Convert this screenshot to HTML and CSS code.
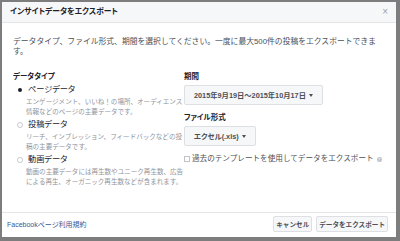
FILE: index.html
```html
<!DOCTYPE html>
<html lang="ja">
<head>
    <meta charset="UTF-8">
    <title>インサイトデータをエクスポート</title>
    <link rel="stylesheet" href="styles.css">
</head>
<body>
    <div class="dialog">
        <div class="header">
            <span class="title">インサイトデータをエクスポート</span>
            <span class="close">×</span>
        </div>

        <div class="content">
            <p class="intro">データタイプ、ファイル形式、期間を選択してください。一度に最大500件の投稿をエクスポートできます。</p>

            <div class="columns">
                <div class="col-left">
                    <div class="label">データタイプ</div>

                    <div class="option">
                        <div class="option-row"><span class="radio checked"></span>ページデータ</div>
                        <div class="desc">エンゲージメント、いいね！の場所、オーディエンス情報などのページの主要データです。</div>
                    </div>
                    <div class="option">
                        <div class="option-row"><span class="radio"></span>投稿データ</div>
                        <div class="desc">リーチ、インプレッション、フィードバックなどの投稿の主要データです。</div>
                    </div>
                    <div class="option">
                        <div class="option-row"><span class="radio"></span>動画データ</div>
                        <div class="desc">動画の主要データには再生数やユニーク再生数、広告による再生、オーガニック再生数などが含まれます。</div>
                    </div>
                </div>

                <div class="col-right">
                    <div class="label">期間</div>
                    <button class="select">2015年9月19日～2015年10月17日 <span class="caret"></span></button>

                    <div class="label spaced">ファイル形式</div>
                    <button class="select">エクセル(.xls) <span class="caret"></span></button>

                    <div class="check-row">
                        <span class="checkbox"></span>
                        過去のテンプレートを使用してデータをエクスポート
                        <span class="help">?</span>
                    </div>
                </div>
            </div>
        </div>

        <div class="footer">
            <a class="terms" href="#">Facebookページ利用規約</a>
            <div class="actions">
                <button class="btn">キャンセル</button>
                <button class="btn">データをエクスポート</button>
            </div>
        </div>
    </div>
</body>
</html>
```

FILE: styles.css
```css
body {
    margin: 0;
    width: 400px;
    height: 241px;
    background: #7d7d7d;
    font-family: "Liberation Sans", "Noto Sans CJK JP", sans-serif;
    font-size: 7.5px;
    line-height: 10px;
    color: #4b4f56;
    font-feature-settings: "palt";
    overflow: hidden;
}

.dialog {
    margin: 2px 4px 0 2px;
    height: 235px;
    background: #ffffff;
    display: flex;
    flex-direction: column;
}

.header {
    height: 20px;
    padding: 0 8px 0 8px;
    background: #f6f7f9;
    border-bottom: 1px solid #e5e5e5;
    display: flex;
    justify-content: space-between;
    align-items: center;
    flex-shrink: 0;
}

.title {
    font-weight: bold;
    color: #1d2129;
    font-size: 7.8px;
}

.close {
    color: #a0a3a9;
    font-size: 10px;
}

.content {
    flex: 1;
    padding: 14px 13px 0 11px;
}

.intro {
    margin: 0;
    padding-right: 4px;
    font-size: 7.8px;
    font-feature-settings: normal;
}

.columns {
    display: grid;
    grid-template-columns: 171px 1fr;
    margin-top: 15px;
}

.label {
    font-weight: bold;
    color: #1d2129;
}

.label.spaced {
    margin-top: 8px;
}

.option {
    margin-top: 3px;
    margin-bottom: 1px;
}

.option-row {
    display: flex;
    align-items: center;
    color: #1d2129;
    font-size: 8.2px;
}

.radio {
    width: 6px;
    height: 6px;
    border: 1px solid #c8cace;
    border-radius: 50%;
    margin: 0 5px 0 4px;
    box-sizing: border-box;
    position: relative;
}

.radio.checked {
    border: none;
}

.radio.checked::after {
    content: "";
    position: absolute;
    left: 1px;
    top: 1px;
    width: 4px;
    height: 4px;
    border-radius: 50%;
    background: #1d2129;
}

.desc {
    margin-top: 2px;
    padding-left: 13px;
    color: #90949c;
    font-size: 6.55px;
    font-feature-settings: normal;
}

.col-right {
    display: flex;
    flex-direction: column;
    align-items: flex-start;
}

.select {
    margin-top: 3px;
    height: 20px;
    padding: 0 9px;
    border: 1px solid #dddfe2;
    border-radius: 2px;
    background: #f6f7f9;
    color: #4b4f56;
    font-family: inherit;
    font-size: 7.3px;
    font-weight: bold;
    font-feature-settings: "palt";
    display: flex;
    align-items: center;
    gap: 3px;
}

.caret {
    width: 0;
    height: 0;
    border-left: 2px solid transparent;
    border-right: 2px solid transparent;
    border-top: 3px solid #4b4f56;
}

.check-row {
    margin-top: 8px;
    display: flex;
    align-items: center;
    white-space: nowrap;
    color: #4b4f56;
    font-size: 7.6px;
    font-feature-settings: normal;
}

.checkbox {
    width: 6px;
    height: 6px;
    border: 1px solid #bec3c9;
    margin-right: 2px;
    box-sizing: border-box;
}

.help {
    margin-left: 3px;
    width: 5px;
    height: 5px;
    border-radius: 50%;
    background: #bec3c9;
    color: #fff;
    font-size: 4px;
    line-height: 5px;
    text-align: center;
}

.footer {
    height: 24px;
    flex-shrink: 0;
    border-top: 1px solid #e5e5e5;
    padding: 0 8px 0 5px;
    display: flex;
    justify-content: space-between;
    align-items: center;
}

.terms {
    color: #365899;
    text-decoration: none;
    font-size: 7px;
}

.actions {
    display: flex;
    gap: 4px;
    margin-bottom: 3px;
}

.btn {
    height: 16px;
    padding: 0 2px;
    border: 1px solid #dddfe2;
    border-radius: 2px;
    background: #f6f7f9;
    color: #4b4f56;
    font-family: inherit;
    font-size: 6.6px;
    font-weight: bold;
}
```
